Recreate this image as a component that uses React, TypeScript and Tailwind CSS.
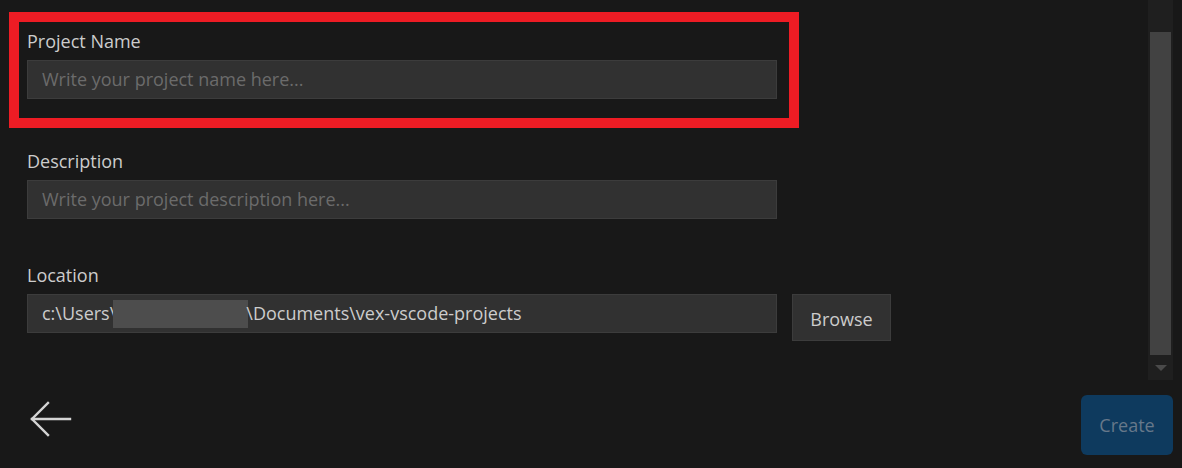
import React from 'react';

const font = { fontFamily: '"Segoe UI", "Open Sans", "Liberation Sans", sans-serif' };

const Field: React.FC<{ label: string; placeholder?: string; children?: React.ReactNode }> = ({ label, placeholder, children }) => (
  <div className="flex flex-col">
    <label className="text-[18px] leading-[24px] text-[#cccccc]">{label}</label>
    {children ?? (
      <div className="mt-[7px] h-[39px] w-[750px] border border-[#3c3c3c] bg-[#313131] px-[14px] flex items-center text-[18px] text-[#6b6b6b]">
        {placeholder}
      </div>
    )}
  </div>
);

export default function App() {
  return (
    <div className="w-[1182px] h-[468px] bg-[#181818] flex flex-col overflow-hidden" style={font}>
      <div className="flex h-[380px]">
        <div className="flex-1 pl-[9px] pt-[12px]">
          {/* highlighted field */}
          <div className="w-[790px] h-[116px] border-[10px] border-[#ed1c24] pl-[8px] pt-[7px]">
            <Field label="Project Name" placeholder="Write your project name here..." />
          </div>

          <div className="pl-[18px] mt-[21px]">
            <Field label="Description" placeholder="Write your project description here..." />
          </div>

          <div className="pl-[18px] mt-[44px]">
            <Field label="Location">
              <div className="mt-[7px] flex items-start gap-[15px]">
                <div className="h-[39px] w-[750px] border border-[#3c3c3c] bg-[#313131] px-[14px] flex items-center text-[18px] text-[#cccccc]">
                  <span>c:\Users\</span>
                  <span className="inline-block w-[135px] h-[28px] bg-[#4d4d4d] -ml-[3px] -mr-[2px]" />
                  <span>\Documents\vex-vscode-projects</span>
                </div>
                <button className="h-[47px] w-[99px] border border-[#3c3c3c] bg-[#313131] text-[18px] text-[#cccccc] pt-[4px]">
                  Browse
                </button>
              </div>
            </Field>
          </div>
        </div>

        {/* scrollbar */}
        <div className="w-[25px] mr-[9px] bg-[#1f1f1f] flex flex-col items-center">
          <div className="mt-[32px] h-[323px] w-[21px] bg-[#424242]" />
          <div className="flex-1 flex items-center justify-center">
            <div className="w-0 h-0 border-l-[6px] border-r-[6px] border-t-[6px] border-l-transparent border-r-transparent border-t-[#4a4a4a]" />
          </div>
        </div>
      </div>

      <div className="flex-1 flex items-start justify-between pl-[30px] pr-[9px] pt-[15px]">
        <svg width="44" height="38" viewBox="0 0 44 38" className="mt-[6px]" fill="none" stroke="#d4d4d4" strokeWidth="2.4" strokeLinecap="square">
          <path d="M2 18 H40" />
          <path d="M18 2 L2 18 L18 34" />
        </svg>
        <button className="w-[92px] h-[60px] rounded-[6px] bg-[#0e3a5e] text-[18px] text-[#66788a]">Create</button>
      </div>
    </div>
  );
}
